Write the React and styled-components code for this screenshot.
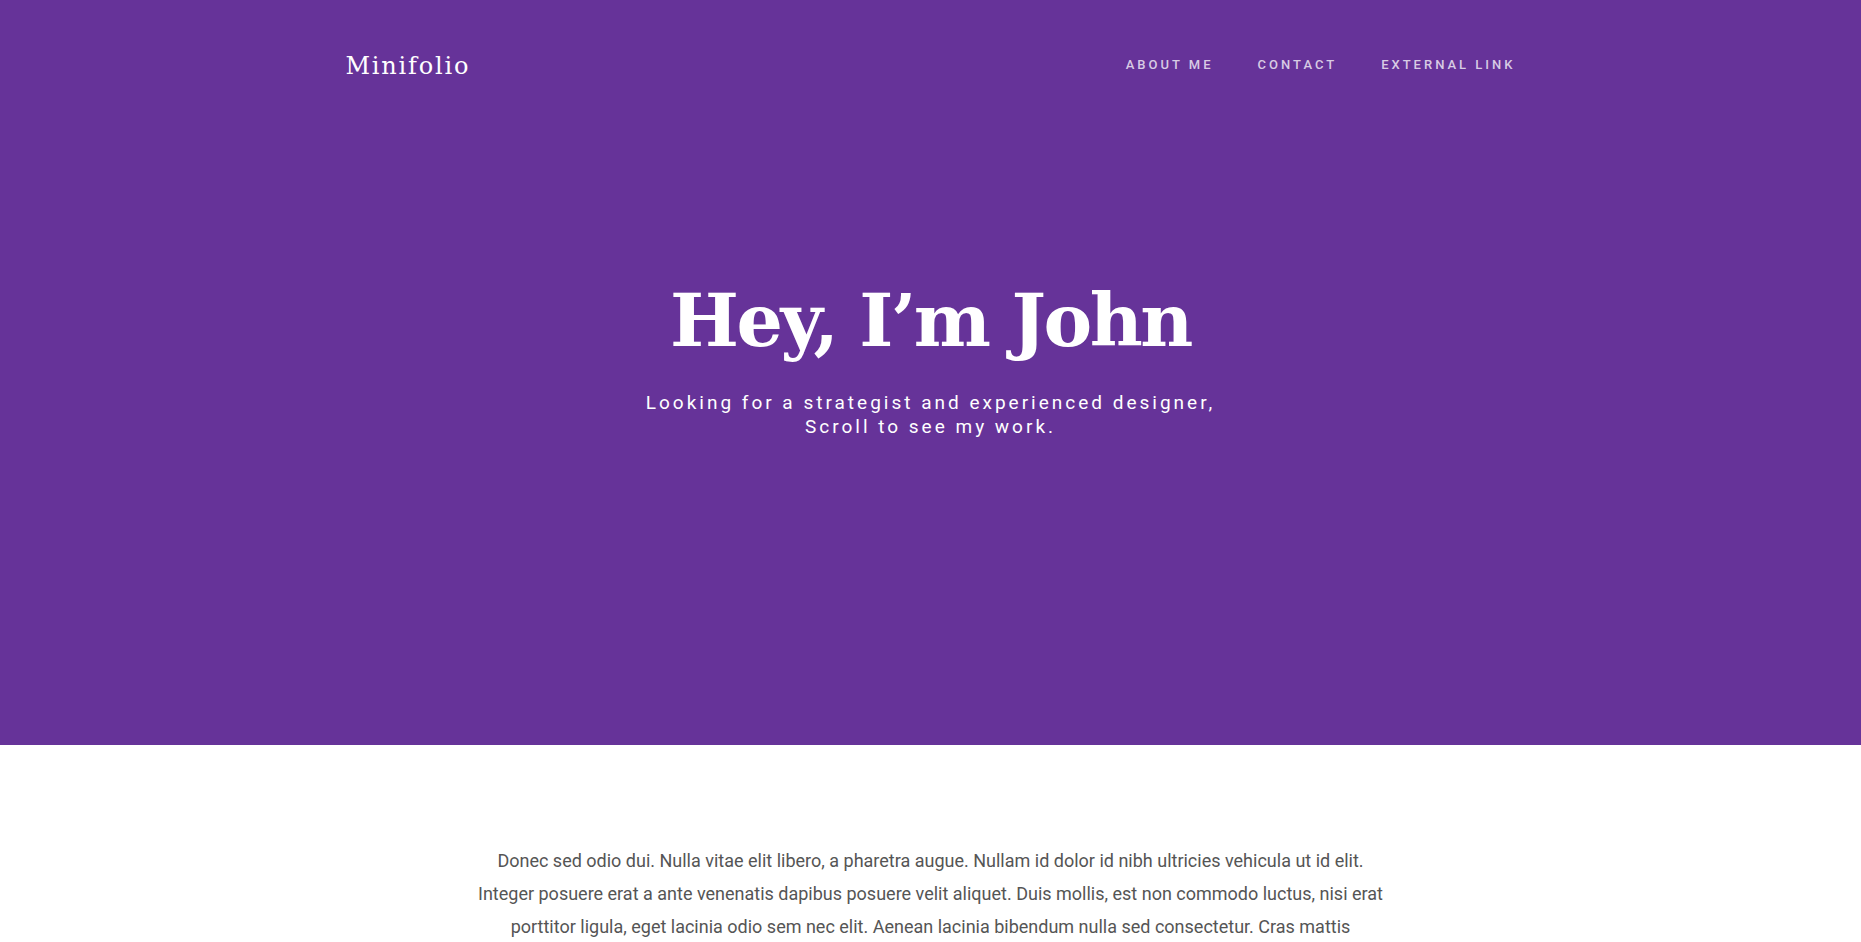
import React from 'react';
import styled, { createGlobalStyle } from 'styled-components';

const GlobalStyle = createGlobalStyle`
  html, body {
    margin: 0;
    padding: 0;
    background: #fff;
  }
  body {
    font-family: Roboto, "Noto Sans", sans-serif;
    -webkit-font-smoothing: antialiased;
  }
`;

const navLinks = ['About me', 'Contact', 'External link'];

const App = () => {
  return (
    <>
      <GlobalStyle />
      <Hero>
        <Container>
          <Navbar>
            <Brand href="#">Minifolio</Brand>
            <NavList>
              {navLinks.map((label) => (
                <NavItem key={label}>
                  <NavLink href="#">{label}</NavLink>
                </NavItem>
              ))}
            </NavList>
          </Navbar>
        </Container>
        <Intro>
          <Title>Hey, I’m John</Title>
          <Lead>
            Looking for a strategist and experienced designer,
            <br />
            Scroll to see my work.
          </Lead>
        </Intro>
      </Hero>
      <Section>
        <Copy>
          Donec sed odio dui. Nulla vitae elit libero, a pharetra augue. Nullam id dolor id nibh
          ultricies vehicula ut id elit. Integer posuere erat a ante venenatis dapibus posuere velit
          aliquet. Duis mollis, est non commodo luctus, nisi erat porttitor ligula, eget lacinia odio
          sem nec elit. Aenean lacinia bibendum nulla sed consectetur. Cras mattis consectetur purus
          sit amet fermentum. Maecenas faucibus mollis interdum.
        </Copy>
      </Section>
    </>
  );
};

const Hero = styled.header`
  background-color: #663399;
  height: 745px;
  display: flex;
  flex-direction: column;
`;

const Container = styled.div`
  width: 1170px;
  margin: 0 auto;
`;

const Navbar = styled.nav`
  display: flex;
  justify-content: space-between;
  align-items: center;
  height: 130px;
`;

const Brand = styled.a`
  font-family: "DejaVu Serif", "Liberation Serif", serif;
  font-size: 24px;
  letter-spacing: 1.8px;
  color: #fff;
  text-decoration: none;
  margin-top: 1px;
`;

const NavList = styled.ul`
  display: flex;
  gap: 44px;
  list-style: none;
  margin: -3px 0 0;
  padding: 0;
`;

const NavItem = styled.li``;

const NavLink = styled.a`
  font-family: Roboto, sans-serif;
  font-size: 13px;
  font-weight: 500;
  letter-spacing: 3px;
  text-transform: uppercase;
  color: rgba(255, 255, 255, 0.75);
  text-decoration: none;
`;

const Intro = styled.div`
  text-align: center;
  color: #fff;
  padding-top: 154px;
`;

const Title = styled.h1`
  font-family: "DejaVu Serif", "Liberation Serif", serif;
  font-weight: 700;
  font-size: 73px;
  letter-spacing: -2.5px;
  line-height: 1;
  margin: 0 0 34px;
`;

const Lead = styled.p`
  font-family: Roboto, sans-serif;
  font-size: 19px;
  line-height: 24px;
  letter-spacing: 3px;
  margin: 0;
`;

const Section = styled.section`
  padding: 99px 0 60px;
`;

const Copy = styled.p`
  width: 920px;
  margin: 0 auto;
  text-align: center;
  font-family: Roboto, sans-serif;
  font-size: 18px;
  line-height: 33px;
  color: #555;
`;

export default App;
